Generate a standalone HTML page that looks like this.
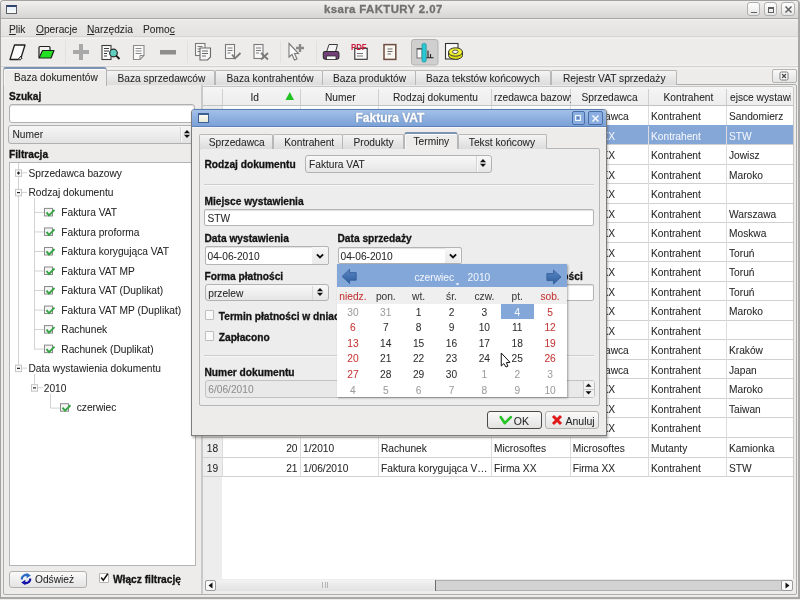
<!DOCTYPE html>
<html><head><meta charset="utf-8">
<style>
*{box-sizing:border-box}
html,body{margin:0;padding:0}
body{width:800px;height:600px;overflow:hidden;position:relative;will-change:transform;background:#edeceb;font-family:"Liberation Sans",sans-serif;font-size:10.2px;color:#262626}
.a{position:absolute}
.t{position:absolute;white-space:nowrap;line-height:10px;-webkit-text-stroke:0.05px currentColor}
.b{font-weight:bold;-webkit-text-stroke:0.3px currentColor;color:#141414}
.u{text-decoration:underline;text-underline-offset:1px}
.tab{top:69.5px;height:15.5px;border:1px solid #b8b8b8;border-bottom:none;border-radius:2px 2px 0 0;background:linear-gradient(#f4f4f4,#dcdcdc)}
.dtab{top:134.4px;height:14.6px;border:1px solid #b8b8b8;border-bottom:none;border-radius:2px 2px 0 0;background:linear-gradient(#f4f4f4,#dcdcdc)}
.cmb{border:1px solid #b2b2b2;border-radius:3px;background:linear-gradient(#f8f8f8,#e6e6e6)}
.inp{border:1px solid #b2b2b2;border-radius:2px;background:#fff;box-shadow:inset 0 1px 1px #e2e2e2}
.chk{width:9.5px;height:10px;border:1px solid #bdbdbd;border-radius:1px;background:#fafafa}
</style></head><body>

<div class="a" style="left:1.00px;top:19.00px;width:798.00px;height:18.00px;background:linear-gradient(#ebeae8,#e3e2e0)"></div>
<div class="a" style="left:1.00px;top:36.30px;width:798.00px;height:1.00px;background:#d6d5d3"></div>
<div class="a" style="left:1.00px;top:37.50px;width:798.00px;height:1.00px;background:#f4f3f1"></div>
<div class="a" style="left:1.00px;top:65.00px;width:798.00px;height:1.00px;background:#f3f2f0"></div>
<div class="a" style="left:1.00px;top:66.30px;width:798.00px;height:1.20px;background:#d4d3d1"></div>
<div class="a" style="left:1.00px;top:68.00px;width:798.00px;height:1.00px;background:#f3f2f0"></div>
<div class="a" style="left:0;top:0;width:800px;height:599px;border:1px solid #a2a2a0;border-right:2px solid #a8a8a6;border-bottom:2px solid #a8a8a6;border-radius:4px 4px 0 0"></div>
<div class="a" style="left:1px;top:1px;width:797px;height:18px;background:linear-gradient(#f1f0ee,#d6d5d3);border-bottom:1px solid #a9a8a6;border-radius:3px 3px 0 0"></div>
<div class="a" style="left:1.00px;top:19.00px;width:797.00px;height:1.00px;background:#f2f1ef"></div>
<div class="a" style="left:6px;top:4.8px;width:11px;height:8.8px;border:1px solid #5c5f66;border-top:2.2px solid #34466c;background:linear-gradient(#e6f0fc,#fbfbf6)"></div>
<div class="t b" style="left:324px;top:2.9px;font-size:11.4px;letter-spacing:0.4px;color:#707070;line-height:12px">ksara FAKTURY 2.07</div>
<div class="a" style="left:747px;top:2px;width:13px;height:14px;border:1px solid #b0b0b0;border-radius:3px;background:linear-gradient(#ffffff,#e6e6e6)"><div class="a" style="left:2.5px;top:8.5px;width:6.5px;height:1.6px;background:#606060"></div></div>
<div class="a" style="left:764px;top:2px;width:13px;height:14px;border:1px solid #b0b0b0;border-radius:3px;background:linear-gradient(#ffffff,#e6e6e6)"><div class="a" style="left:2.5px;top:3.5px;width:6.5px;height:6px;border:1px solid #606060;border-top:2px solid #606060"></div></div>
<div class="a" style="left:781px;top:2px;width:14px;height:14px;border:1px solid #b0b0b0;border-radius:3px;background:linear-gradient(#ffffff,#e6e6e6)"><svg class="a" style="left:2px;top:2px" width="9" height="9" viewBox="0 0 9 9"><path d="M1.5 1.5L7.5 7.5M7.5 1.5L1.5 7.5" stroke="#606060" stroke-width="1.5"/></svg></div>
<div class="t" style="left:9.00px;top:25.20px;"><span class="u">P</span>lik</div>
<div class="t" style="left:36.00px;top:25.20px;"><span class="u">O</span>peracje</div>
<div class="t" style="left:87.00px;top:25.20px;"><span class="u">N</span>arzędzia</div>
<div class="t" style="left:143.00px;top:25.20px;">Pomo<span class="u">c</span></div>
<!-- toolbar -->
<svg class="a" style="left:0;top:36px" width="480" height="32" viewBox="0 36 480 32">
 <g stroke-linejoin="round">
 <!-- new -->
 <path d="M14.5 45 L25 45 L20.5 59.5 L10 59.5 Z" fill="#fbfbfb" stroke="#1e1e1e" stroke-width="1.3"/>
 <path d="M18 59.5 L21 56 L22 59" fill="#ddd" stroke="#1e1e1e" stroke-width="1"/>
 <!-- folder -->
 <path d="M39 57.5 L39 47.5 Q39 46.5 40 46.5 L49 46.5 Q50 46.5 50 47.5 L50 50" fill="#f2f2f2" stroke="#1e1e1e" stroke-width="1.2"/>
 <path d="M39 58 L42.5 50.5 L54 50.5 L51 58 Z" fill="#22e022" stroke="#1e1e1e" stroke-width="1.2"/>
 </g>
 <line x1="65.5" y1="41" x2="65.5" y2="63" stroke="#e0e0e0"/>
 <!-- plus -->
 <path d="M79 44 h4 v6 h6 v4 h-6 v6 h-4 v-6 h-6 v-4 h6 z" fill="#a8a8a8"/>
 <!-- doc magnifier -->
 <rect x="102" y="45.5" width="9" height="14" fill="#fafafa" stroke="#3c3c3c" stroke-width="1.1"/>
 <path d="M104 48.5h5M104 51h5M104 53.5h3M104 56h3" stroke="#3c3c3c" stroke-width="1"/>
 <circle cx="113.5" cy="53" r="3.8" fill="#5fd0c0" stroke="#2a2a2a" stroke-width="1.2"/>
 <path d="M116 55.5 L119.5 59" stroke="#1e1e1e" stroke-width="1.8"/>
 <!-- doc -->
 <path d="M133.5 45.5 h10.5 v10 l-4 4 h-6.5 z" fill="#fafafa" stroke="#8a8a8a" stroke-width="1.1"/>
 <path d="M140 59.5 v-4 h4" fill="none" stroke="#8a8a8a" stroke-width="1"/>
 <path d="M135.5 48.5h6M135.5 51h6M135.5 53.5h6" stroke="#8a8a8a" stroke-width="1"/>
 <!-- minus -->
 <rect x="160" y="50" width="16" height="4.5" fill="#8d8d8d"/>
 <line x1="187.5" y1="41" x2="187.5" y2="63" stroke="#e0e0e0"/>
 <!-- copy docs -->
 <rect x="195.5" y="43.5" width="9.5" height="12" fill="#f7f7f7" stroke="#7a7a7a" stroke-width="1.1"/>
 <path d="M197.5 46.5h5M197.5 49h5M197.5 51.5h5" stroke="#7a7a7a"/>
 <path d="M200 48 h10.5 v9 l-3 3 h-7.5 z" fill="#f7f7f7" stroke="#6a6a6a" stroke-width="1.1"/>
 <path d="M202 51h6M202 53.5h6M202 56h4" stroke="#6a6a6a"/>
 <!-- doc check -->
 <rect x="225.5" y="44.5" width="9" height="14" fill="#f7f7f7" stroke="#7a7a7a" stroke-width="1.1"/>
 <path d="M227.5 48h5M227.5 50.5h5M227.5 53h3" stroke="#7a7a7a"/>
 <path d="M232 54.5 L235 58.5 L240.5 53" fill="none" stroke="#7a7a7a" stroke-width="1.8"/>
 <!-- doc x -->
 <rect x="254" y="44.5" width="9" height="14" fill="#f7f7f7" stroke="#7a7a7a" stroke-width="1.1"/>
 <path d="M256 48h5M256 50.5h5M256 53h3" stroke="#7a7a7a"/>
 <path d="M261 53 L268 59.5 M268 53 L261 59.5" fill="none" stroke="#7a7a7a" stroke-width="1.8"/>
 <line x1="280.5" y1="41" x2="280.5" y2="63" stroke="#e0e0e0"/>
 <!-- cursor plus -->
 <path d="M289 43.5 L289 57 L292 54.5 L294.5 60 L297 59 L294.5 53.5 L298.5 53.5 Z" fill="#fafafa" stroke="#7a7a7a" stroke-width="1.1"/>
 <path d="M300 44 v8 M296 48 h8" stroke="#8a8a8a" stroke-width="2.4"/>
 <line x1="316.5" y1="41" x2="316.5" y2="63" stroke="#e0e0e0"/>
 <!-- printer -->
 <path d="M326.5 52 L329 44.5 L337.5 44.5 L335.5 52 Z" fill="#f4f4f4" stroke="#3a3a3a" stroke-width="1"/>
 <rect x="323.3" y="51.5" width="15.6" height="7.6" rx="1.8" fill="#74407a" stroke="#2a2a2a" stroke-width="1.1"/>
 <rect x="326.5" y="56" width="9.5" height="3.6" fill="#fafafa" stroke="#2e2e2e" stroke-width="0.8"/>
 <!-- pdf -->
 <rect x="354.8" y="48.3" width="12.4" height="11" fill="#fafafa" stroke="#2e2e2e" stroke-width="1.1"/>
 <path d="M357 53.5h6M357 56h6" stroke="#666" stroke-width="0.9"/>
 <text x="351" y="50.3" font-family="Liberation Sans" font-weight="bold" font-size="8.4" textLength="15.6" lengthAdjust="spacingAndGlyphs" fill="#cc1a3a">PDF</text>
 <!-- brown doc -->
 <rect x="384" y="44.6" width="11.8" height="14.8" fill="#faf6f2" stroke="#6e4c42" stroke-width="1.5"/>
 <path d="M387.5 49h5M387.5 51.5h5M387.5 54h3.5" stroke="#555" stroke-width="0.9"/>
 <!-- toggle -->
 <rect x="411.5" y="39.5" width="26.5" height="25.5" rx="2.5" fill="#cfcfcf" stroke="#b2b2b2"/>
 <rect x="417" y="48.5" width="5" height="9.5" fill="#fafafa" stroke="#666" stroke-width="0.9"/>
 <rect x="417" y="48" width="5" height="1.6" fill="#555"/>
 <rect x="422" y="43.5" width="4.2" height="18.5" rx="1.5" fill="#2ac8d4" stroke="#1a8f99" stroke-width="0.7"/>
 <path d="M428 50.5v7M430.5 54v3.5M426.5 57.8h7" stroke="#222" stroke-width="1.1"/>
 <!-- yellow nut -->
 <rect x="445.5" y="43.5" width="12.5" height="15.5" fill="#fafafa" stroke="#333" stroke-width="1.1"/>
 <path d="M448.5 52 v3.5 a7 3.8 0 0 0 14 0 v-3.5" fill="#dede10" stroke="#333" stroke-width="1"/>
 <ellipse cx="455.5" cy="52" rx="7" ry="4.2" fill="#eef030" stroke="#333" stroke-width="1"/>
 <ellipse cx="455.3" cy="51.8" rx="2.8" ry="1.7" fill="#fafafa" stroke="#444" stroke-width="0.9"/>
</svg>
<div class="a" style="left:3.00px;top:84.00px;width:793.50px;height:510.50px;border:1px solid #adadab;border-radius:2px;background:#edeceb"></div>
<div class="a tab" style="left:106px;width:109px"></div>
<div class="a tab" style="left:215px;width:108px"></div>
<div class="a tab" style="left:322px;width:94px"></div>
<div class="a tab" style="left:415px;width:136px"></div>
<div class="a tab" style="left:551px;width:126px"></div>
<div class="t" style="left:117.50px;top:73.50px;">Baza sprzedawców</div>
<div class="t" style="left:226.50px;top:73.50px;">Baza kontrahentów</div>
<div class="t" style="left:333.00px;top:73.50px;">Baza produktów</div>
<div class="t" style="left:426.00px;top:73.50px;">Baza tekstów końcowych</div>
<div class="t" style="left:563.00px;top:73.50px;">Rejestr VAT sprzedaży</div>
<div class="a" style="left:3.00px;top:67.00px;width:104.00px;height:19.00px;border:1px solid #b4b4b4;border-bottom:none;border-top:2px solid #7a94b2;border-radius:3px 3px 0 0;background:#edeceb;box-shadow:inset 0 1px 0 #fbfbfb,inset 1px 0 0 #f8f8f8"></div>
<div class="t" style="left:14.00px;top:72.80px;">Baza dokumentów</div>
<div class="a" style="left:772.00px;top:69.00px;width:25.00px;height:14.00px;border:1px solid #b4b4b4;border-radius:2px;background:linear-gradient(#f8f8f8,#e4e4e4)"></div>
<svg class="a" style="left:779px;top:71px" width="10" height="10" viewBox="0 0 10 10"><rect x="1" y="1" width="8" height="8" rx="1.5" fill="#fff" stroke="#777" stroke-width="1"/><path d="M3 3L7 7M7 3L3 7" stroke="#444" stroke-width="1.2"/></svg>
<div class="a" style="left:202.50px;top:86.00px;width:591.00px;height:493.00px;background:#fff;border-left:1px solid #b8b8b8"></div>
<div class="a" style="left:203.00px;top:86.00px;width:19.00px;height:493.00px;background:#ededed"></div>
<div class="a" style="left:203.00px;top:86.00px;width:590.00px;height:20.00px;background:linear-gradient(#f5f5f5,#ededed);border-bottom:1px solid #c2c2c2;border-top:1px solid #c6c6c6"></div>
<div class="a" style="left:221.50px;top:89.00px;width:1.00px;height:16.00px;background:#cfcfcf"></div>
<div class="a" style="left:299.50px;top:89.00px;width:1.00px;height:16.00px;background:#cfcfcf"></div>
<div class="a" style="left:377.50px;top:89.00px;width:1.00px;height:16.00px;background:#cfcfcf"></div>
<div class="a" style="left:490.50px;top:89.00px;width:1.00px;height:16.00px;background:#cfcfcf"></div>
<div class="a" style="left:570.00px;top:89.00px;width:1.00px;height:16.00px;background:#cfcfcf"></div>
<div class="a" style="left:647.50px;top:89.00px;width:1.00px;height:16.00px;background:#cfcfcf"></div>
<div class="a" style="left:725.50px;top:89.00px;width:1.00px;height:16.00px;background:#cfcfcf"></div>
<div class="t" style="left:250.50px;top:93.00px;">Id</div>
<div class="t" style="left:325.00px;top:93.00px;">Numer</div>
<div class="t" style="left:393.00px;top:93.00px;">Rodzaj dokumentu</div>
<div class="t" style="left:581.50px;top:93.00px;">Sprzedawca</div>
<div class="t" style="left:663.50px;top:93.00px;">Kontrahent</div>
<div class="a" style="left:492px;top:88px;width:78.5px;height:17px;overflow:hidden"><div class="t" style="left:2px;top:5.00px">rzedawca bazowy</div></div>
<div class="a" style="left:727px;top:88px;width:63.5px;height:17px;overflow:hidden"><div class="t" style="left:3px;top:5.00px">ejsce wystawienia</div></div>
<svg class="a" style="left:285px;top:91px" width="10" height="10" viewBox="0 0 10 10"><path d="M0.5 9 L4.8 1 L9 9 Z" fill="#22c322"/></svg>
<div class="a" style="left:203.00px;top:124.53px;width:590.00px;height:1.00px;background:#d0d0d0"></div>
<div class="a" style="left:221.50px;top:106.00px;width:1.00px;height:19.53px;background:#dcdcdc"></div>
<div class="a" style="left:299.50px;top:106.00px;width:1.00px;height:19.53px;background:#dcdcdc"></div>
<div class="a" style="left:377.50px;top:106.00px;width:1.00px;height:19.53px;background:#dcdcdc"></div>
<div class="a" style="left:490.50px;top:106.00px;width:1.00px;height:19.53px;background:#dcdcdc"></div>
<div class="a" style="left:570.00px;top:106.00px;width:1.00px;height:19.53px;background:#dcdcdc"></div>
<div class="a" style="left:647.50px;top:106.00px;width:1.00px;height:19.53px;background:#dcdcdc"></div>
<div class="a" style="left:725.50px;top:106.00px;width:1.00px;height:19.53px;background:#dcdcdc"></div>
<div class="t" style="left:203.00px;top:112.00px;width:19.00px;text-align:center;">1</div>
<div class="t" style="left:572.70px;top:112.00px;">Sprzedawca</div>
<div class="t" style="left:651.00px;top:112.00px;">Kontrahent</div>
<div class="t" style="left:729.00px;top:112.00px;">Sandomierz</div>
<div class="a" style="left:222.00px;top:125.03px;width:571.00px;height:19.53px;background:#84a7d7"></div>
<div class="a" style="left:203.00px;top:144.06px;width:590.00px;height:1.00px;background:#d0d0d0"></div>
<div class="a" style="left:221.50px;top:125.53px;width:1.00px;height:19.53px;background:#dcdcdc"></div>
<div class="a" style="left:299.50px;top:125.53px;width:1.00px;height:19.53px;background:#dcdcdc"></div>
<div class="a" style="left:377.50px;top:125.53px;width:1.00px;height:19.53px;background:#dcdcdc"></div>
<div class="a" style="left:490.50px;top:125.53px;width:1.00px;height:19.53px;background:#dcdcdc"></div>
<div class="a" style="left:570.00px;top:125.53px;width:1.00px;height:19.53px;background:#dcdcdc"></div>
<div class="a" style="left:647.50px;top:125.53px;width:1.00px;height:19.53px;background:#dcdcdc"></div>
<div class="a" style="left:725.50px;top:125.53px;width:1.00px;height:19.53px;background:#dcdcdc"></div>
<div class="t" style="left:203.00px;top:131.53px;width:19.00px;text-align:center;">2</div>
<div class="t" style="left:572.70px;top:131.53px;color:#f4f7fb;">Firma XX</div>
<div class="t" style="left:651.00px;top:131.53px;color:#f4f7fb;">Kontrahent</div>
<div class="t" style="left:729.00px;top:131.53px;color:#f4f7fb;">STW</div>
<div class="a" style="left:203.00px;top:163.59px;width:590.00px;height:1.00px;background:#d0d0d0"></div>
<div class="a" style="left:221.50px;top:145.06px;width:1.00px;height:19.53px;background:#dcdcdc"></div>
<div class="a" style="left:299.50px;top:145.06px;width:1.00px;height:19.53px;background:#dcdcdc"></div>
<div class="a" style="left:377.50px;top:145.06px;width:1.00px;height:19.53px;background:#dcdcdc"></div>
<div class="a" style="left:490.50px;top:145.06px;width:1.00px;height:19.53px;background:#dcdcdc"></div>
<div class="a" style="left:570.00px;top:145.06px;width:1.00px;height:19.53px;background:#dcdcdc"></div>
<div class="a" style="left:647.50px;top:145.06px;width:1.00px;height:19.53px;background:#dcdcdc"></div>
<div class="a" style="left:725.50px;top:145.06px;width:1.00px;height:19.53px;background:#dcdcdc"></div>
<div class="t" style="left:203.00px;top:151.06px;width:19.00px;text-align:center;">3</div>
<div class="t" style="left:572.70px;top:151.06px;">Firma XX</div>
<div class="t" style="left:651.00px;top:151.06px;">Kontrahent</div>
<div class="t" style="left:729.00px;top:151.06px;">Jowisz</div>
<div class="a" style="left:203.00px;top:183.12px;width:590.00px;height:1.00px;background:#d0d0d0"></div>
<div class="a" style="left:221.50px;top:164.59px;width:1.00px;height:19.53px;background:#dcdcdc"></div>
<div class="a" style="left:299.50px;top:164.59px;width:1.00px;height:19.53px;background:#dcdcdc"></div>
<div class="a" style="left:377.50px;top:164.59px;width:1.00px;height:19.53px;background:#dcdcdc"></div>
<div class="a" style="left:490.50px;top:164.59px;width:1.00px;height:19.53px;background:#dcdcdc"></div>
<div class="a" style="left:570.00px;top:164.59px;width:1.00px;height:19.53px;background:#dcdcdc"></div>
<div class="a" style="left:647.50px;top:164.59px;width:1.00px;height:19.53px;background:#dcdcdc"></div>
<div class="a" style="left:725.50px;top:164.59px;width:1.00px;height:19.53px;background:#dcdcdc"></div>
<div class="t" style="left:203.00px;top:170.59px;width:19.00px;text-align:center;">4</div>
<div class="t" style="left:572.70px;top:170.59px;">Firma XX</div>
<div class="t" style="left:651.00px;top:170.59px;">Kontrahent</div>
<div class="t" style="left:729.00px;top:170.59px;">Maroko</div>
<div class="a" style="left:203.00px;top:202.65px;width:590.00px;height:1.00px;background:#d0d0d0"></div>
<div class="a" style="left:221.50px;top:184.12px;width:1.00px;height:19.53px;background:#dcdcdc"></div>
<div class="a" style="left:299.50px;top:184.12px;width:1.00px;height:19.53px;background:#dcdcdc"></div>
<div class="a" style="left:377.50px;top:184.12px;width:1.00px;height:19.53px;background:#dcdcdc"></div>
<div class="a" style="left:490.50px;top:184.12px;width:1.00px;height:19.53px;background:#dcdcdc"></div>
<div class="a" style="left:570.00px;top:184.12px;width:1.00px;height:19.53px;background:#dcdcdc"></div>
<div class="a" style="left:647.50px;top:184.12px;width:1.00px;height:19.53px;background:#dcdcdc"></div>
<div class="a" style="left:725.50px;top:184.12px;width:1.00px;height:19.53px;background:#dcdcdc"></div>
<div class="t" style="left:203.00px;top:190.12px;width:19.00px;text-align:center;">5</div>
<div class="t" style="left:572.70px;top:190.12px;">Firma XX</div>
<div class="t" style="left:651.00px;top:190.12px;">Kontrahent</div>
<div class="a" style="left:203.00px;top:222.18px;width:590.00px;height:1.00px;background:#d0d0d0"></div>
<div class="a" style="left:221.50px;top:203.65px;width:1.00px;height:19.53px;background:#dcdcdc"></div>
<div class="a" style="left:299.50px;top:203.65px;width:1.00px;height:19.53px;background:#dcdcdc"></div>
<div class="a" style="left:377.50px;top:203.65px;width:1.00px;height:19.53px;background:#dcdcdc"></div>
<div class="a" style="left:490.50px;top:203.65px;width:1.00px;height:19.53px;background:#dcdcdc"></div>
<div class="a" style="left:570.00px;top:203.65px;width:1.00px;height:19.53px;background:#dcdcdc"></div>
<div class="a" style="left:647.50px;top:203.65px;width:1.00px;height:19.53px;background:#dcdcdc"></div>
<div class="a" style="left:725.50px;top:203.65px;width:1.00px;height:19.53px;background:#dcdcdc"></div>
<div class="t" style="left:203.00px;top:209.65px;width:19.00px;text-align:center;">6</div>
<div class="t" style="left:572.70px;top:209.65px;">Firma XX</div>
<div class="t" style="left:651.00px;top:209.65px;">Kontrahent</div>
<div class="t" style="left:729.00px;top:209.65px;">Warszawa</div>
<div class="a" style="left:203.00px;top:241.71px;width:590.00px;height:1.00px;background:#d0d0d0"></div>
<div class="a" style="left:221.50px;top:223.18px;width:1.00px;height:19.53px;background:#dcdcdc"></div>
<div class="a" style="left:299.50px;top:223.18px;width:1.00px;height:19.53px;background:#dcdcdc"></div>
<div class="a" style="left:377.50px;top:223.18px;width:1.00px;height:19.53px;background:#dcdcdc"></div>
<div class="a" style="left:490.50px;top:223.18px;width:1.00px;height:19.53px;background:#dcdcdc"></div>
<div class="a" style="left:570.00px;top:223.18px;width:1.00px;height:19.53px;background:#dcdcdc"></div>
<div class="a" style="left:647.50px;top:223.18px;width:1.00px;height:19.53px;background:#dcdcdc"></div>
<div class="a" style="left:725.50px;top:223.18px;width:1.00px;height:19.53px;background:#dcdcdc"></div>
<div class="t" style="left:203.00px;top:229.18px;width:19.00px;text-align:center;">7</div>
<div class="t" style="left:572.70px;top:229.18px;">Firma XX</div>
<div class="t" style="left:651.00px;top:229.18px;">Kontrahent</div>
<div class="t" style="left:729.00px;top:229.18px;">Moskwa</div>
<div class="a" style="left:203.00px;top:261.24px;width:590.00px;height:1.00px;background:#d0d0d0"></div>
<div class="a" style="left:221.50px;top:242.71px;width:1.00px;height:19.53px;background:#dcdcdc"></div>
<div class="a" style="left:299.50px;top:242.71px;width:1.00px;height:19.53px;background:#dcdcdc"></div>
<div class="a" style="left:377.50px;top:242.71px;width:1.00px;height:19.53px;background:#dcdcdc"></div>
<div class="a" style="left:490.50px;top:242.71px;width:1.00px;height:19.53px;background:#dcdcdc"></div>
<div class="a" style="left:570.00px;top:242.71px;width:1.00px;height:19.53px;background:#dcdcdc"></div>
<div class="a" style="left:647.50px;top:242.71px;width:1.00px;height:19.53px;background:#dcdcdc"></div>
<div class="a" style="left:725.50px;top:242.71px;width:1.00px;height:19.53px;background:#dcdcdc"></div>
<div class="t" style="left:203.00px;top:248.71px;width:19.00px;text-align:center;">8</div>
<div class="t" style="left:572.70px;top:248.71px;">Firma XX</div>
<div class="t" style="left:651.00px;top:248.71px;">Kontrahent</div>
<div class="t" style="left:729.00px;top:248.71px;">Toruń</div>
<div class="a" style="left:203.00px;top:280.77px;width:590.00px;height:1.00px;background:#d0d0d0"></div>
<div class="a" style="left:221.50px;top:262.24px;width:1.00px;height:19.53px;background:#dcdcdc"></div>
<div class="a" style="left:299.50px;top:262.24px;width:1.00px;height:19.53px;background:#dcdcdc"></div>
<div class="a" style="left:377.50px;top:262.24px;width:1.00px;height:19.53px;background:#dcdcdc"></div>
<div class="a" style="left:490.50px;top:262.24px;width:1.00px;height:19.53px;background:#dcdcdc"></div>
<div class="a" style="left:570.00px;top:262.24px;width:1.00px;height:19.53px;background:#dcdcdc"></div>
<div class="a" style="left:647.50px;top:262.24px;width:1.00px;height:19.53px;background:#dcdcdc"></div>
<div class="a" style="left:725.50px;top:262.24px;width:1.00px;height:19.53px;background:#dcdcdc"></div>
<div class="t" style="left:203.00px;top:268.24px;width:19.00px;text-align:center;">9</div>
<div class="t" style="left:572.70px;top:268.24px;">Firma XX</div>
<div class="t" style="left:651.00px;top:268.24px;">Kontrahent</div>
<div class="t" style="left:729.00px;top:268.24px;">Toruń</div>
<div class="a" style="left:203.00px;top:300.30px;width:590.00px;height:1.00px;background:#d0d0d0"></div>
<div class="a" style="left:221.50px;top:281.77px;width:1.00px;height:19.53px;background:#dcdcdc"></div>
<div class="a" style="left:299.50px;top:281.77px;width:1.00px;height:19.53px;background:#dcdcdc"></div>
<div class="a" style="left:377.50px;top:281.77px;width:1.00px;height:19.53px;background:#dcdcdc"></div>
<div class="a" style="left:490.50px;top:281.77px;width:1.00px;height:19.53px;background:#dcdcdc"></div>
<div class="a" style="left:570.00px;top:281.77px;width:1.00px;height:19.53px;background:#dcdcdc"></div>
<div class="a" style="left:647.50px;top:281.77px;width:1.00px;height:19.53px;background:#dcdcdc"></div>
<div class="a" style="left:725.50px;top:281.77px;width:1.00px;height:19.53px;background:#dcdcdc"></div>
<div class="t" style="left:203.00px;top:287.77px;width:19.00px;text-align:center;">10</div>
<div class="t" style="left:572.70px;top:287.77px;">Firma XX</div>
<div class="t" style="left:651.00px;top:287.77px;">Kontrahent</div>
<div class="t" style="left:729.00px;top:287.77px;">Toruń</div>
<div class="a" style="left:203.00px;top:319.83px;width:590.00px;height:1.00px;background:#d0d0d0"></div>
<div class="a" style="left:221.50px;top:301.30px;width:1.00px;height:19.53px;background:#dcdcdc"></div>
<div class="a" style="left:299.50px;top:301.30px;width:1.00px;height:19.53px;background:#dcdcdc"></div>
<div class="a" style="left:377.50px;top:301.30px;width:1.00px;height:19.53px;background:#dcdcdc"></div>
<div class="a" style="left:490.50px;top:301.30px;width:1.00px;height:19.53px;background:#dcdcdc"></div>
<div class="a" style="left:570.00px;top:301.30px;width:1.00px;height:19.53px;background:#dcdcdc"></div>
<div class="a" style="left:647.50px;top:301.30px;width:1.00px;height:19.53px;background:#dcdcdc"></div>
<div class="a" style="left:725.50px;top:301.30px;width:1.00px;height:19.53px;background:#dcdcdc"></div>
<div class="t" style="left:203.00px;top:307.30px;width:19.00px;text-align:center;">11</div>
<div class="t" style="left:572.70px;top:307.30px;">Firma XX</div>
<div class="t" style="left:651.00px;top:307.30px;">Kontrahent</div>
<div class="t" style="left:729.00px;top:307.30px;">Maroko</div>
<div class="a" style="left:203.00px;top:339.36px;width:590.00px;height:1.00px;background:#d0d0d0"></div>
<div class="a" style="left:221.50px;top:320.83px;width:1.00px;height:19.53px;background:#dcdcdc"></div>
<div class="a" style="left:299.50px;top:320.83px;width:1.00px;height:19.53px;background:#dcdcdc"></div>
<div class="a" style="left:377.50px;top:320.83px;width:1.00px;height:19.53px;background:#dcdcdc"></div>
<div class="a" style="left:490.50px;top:320.83px;width:1.00px;height:19.53px;background:#dcdcdc"></div>
<div class="a" style="left:570.00px;top:320.83px;width:1.00px;height:19.53px;background:#dcdcdc"></div>
<div class="a" style="left:647.50px;top:320.83px;width:1.00px;height:19.53px;background:#dcdcdc"></div>
<div class="a" style="left:725.50px;top:320.83px;width:1.00px;height:19.53px;background:#dcdcdc"></div>
<div class="t" style="left:203.00px;top:326.83px;width:19.00px;text-align:center;">12</div>
<div class="t" style="left:572.70px;top:326.83px;">Firma XX</div>
<div class="t" style="left:651.00px;top:326.83px;">Kontrahent</div>
<div class="a" style="left:203.00px;top:358.89px;width:590.00px;height:1.00px;background:#d0d0d0"></div>
<div class="a" style="left:221.50px;top:340.36px;width:1.00px;height:19.53px;background:#dcdcdc"></div>
<div class="a" style="left:299.50px;top:340.36px;width:1.00px;height:19.53px;background:#dcdcdc"></div>
<div class="a" style="left:377.50px;top:340.36px;width:1.00px;height:19.53px;background:#dcdcdc"></div>
<div class="a" style="left:490.50px;top:340.36px;width:1.00px;height:19.53px;background:#dcdcdc"></div>
<div class="a" style="left:570.00px;top:340.36px;width:1.00px;height:19.53px;background:#dcdcdc"></div>
<div class="a" style="left:647.50px;top:340.36px;width:1.00px;height:19.53px;background:#dcdcdc"></div>
<div class="a" style="left:725.50px;top:340.36px;width:1.00px;height:19.53px;background:#dcdcdc"></div>
<div class="t" style="left:203.00px;top:346.36px;width:19.00px;text-align:center;">13</div>
<div class="t" style="left:572.70px;top:346.36px;">Sprzedawca</div>
<div class="t" style="left:651.00px;top:346.36px;">Kontrahent</div>
<div class="t" style="left:729.00px;top:346.36px;">Kraków</div>
<div class="a" style="left:203.00px;top:378.42px;width:590.00px;height:1.00px;background:#d0d0d0"></div>
<div class="a" style="left:221.50px;top:359.89px;width:1.00px;height:19.53px;background:#dcdcdc"></div>
<div class="a" style="left:299.50px;top:359.89px;width:1.00px;height:19.53px;background:#dcdcdc"></div>
<div class="a" style="left:377.50px;top:359.89px;width:1.00px;height:19.53px;background:#dcdcdc"></div>
<div class="a" style="left:490.50px;top:359.89px;width:1.00px;height:19.53px;background:#dcdcdc"></div>
<div class="a" style="left:570.00px;top:359.89px;width:1.00px;height:19.53px;background:#dcdcdc"></div>
<div class="a" style="left:647.50px;top:359.89px;width:1.00px;height:19.53px;background:#dcdcdc"></div>
<div class="a" style="left:725.50px;top:359.89px;width:1.00px;height:19.53px;background:#dcdcdc"></div>
<div class="t" style="left:203.00px;top:365.89px;width:19.00px;text-align:center;">14</div>
<div class="t" style="left:572.70px;top:365.89px;">Sprzedawca</div>
<div class="t" style="left:651.00px;top:365.89px;">Kontrahent</div>
<div class="t" style="left:729.00px;top:365.89px;">Japan</div>
<div class="a" style="left:203.00px;top:397.95px;width:590.00px;height:1.00px;background:#d0d0d0"></div>
<div class="a" style="left:221.50px;top:379.42px;width:1.00px;height:19.53px;background:#dcdcdc"></div>
<div class="a" style="left:299.50px;top:379.42px;width:1.00px;height:19.53px;background:#dcdcdc"></div>
<div class="a" style="left:377.50px;top:379.42px;width:1.00px;height:19.53px;background:#dcdcdc"></div>
<div class="a" style="left:490.50px;top:379.42px;width:1.00px;height:19.53px;background:#dcdcdc"></div>
<div class="a" style="left:570.00px;top:379.42px;width:1.00px;height:19.53px;background:#dcdcdc"></div>
<div class="a" style="left:647.50px;top:379.42px;width:1.00px;height:19.53px;background:#dcdcdc"></div>
<div class="a" style="left:725.50px;top:379.42px;width:1.00px;height:19.53px;background:#dcdcdc"></div>
<div class="t" style="left:203.00px;top:385.42px;width:19.00px;text-align:center;">15</div>
<div class="t" style="left:572.70px;top:385.42px;">Firma XX</div>
<div class="t" style="left:651.00px;top:385.42px;">Kontrahent</div>
<div class="t" style="left:729.00px;top:385.42px;">Maroko</div>
<div class="a" style="left:203.00px;top:417.48px;width:590.00px;height:1.00px;background:#d0d0d0"></div>
<div class="a" style="left:221.50px;top:398.95px;width:1.00px;height:19.53px;background:#dcdcdc"></div>
<div class="a" style="left:299.50px;top:398.95px;width:1.00px;height:19.53px;background:#dcdcdc"></div>
<div class="a" style="left:377.50px;top:398.95px;width:1.00px;height:19.53px;background:#dcdcdc"></div>
<div class="a" style="left:490.50px;top:398.95px;width:1.00px;height:19.53px;background:#dcdcdc"></div>
<div class="a" style="left:570.00px;top:398.95px;width:1.00px;height:19.53px;background:#dcdcdc"></div>
<div class="a" style="left:647.50px;top:398.95px;width:1.00px;height:19.53px;background:#dcdcdc"></div>
<div class="a" style="left:725.50px;top:398.95px;width:1.00px;height:19.53px;background:#dcdcdc"></div>
<div class="t" style="left:203.00px;top:404.95px;width:19.00px;text-align:center;">16</div>
<div class="t" style="left:572.70px;top:404.95px;">Firma XX</div>
<div class="t" style="left:651.00px;top:404.95px;">Kontrahent</div>
<div class="t" style="left:729.00px;top:404.95px;">Taiwan</div>
<div class="a" style="left:203.00px;top:437.01px;width:590.00px;height:1.00px;background:#d0d0d0"></div>
<div class="a" style="left:221.50px;top:418.48px;width:1.00px;height:19.53px;background:#dcdcdc"></div>
<div class="a" style="left:299.50px;top:418.48px;width:1.00px;height:19.53px;background:#dcdcdc"></div>
<div class="a" style="left:377.50px;top:418.48px;width:1.00px;height:19.53px;background:#dcdcdc"></div>
<div class="a" style="left:490.50px;top:418.48px;width:1.00px;height:19.53px;background:#dcdcdc"></div>
<div class="a" style="left:570.00px;top:418.48px;width:1.00px;height:19.53px;background:#dcdcdc"></div>
<div class="a" style="left:647.50px;top:418.48px;width:1.00px;height:19.53px;background:#dcdcdc"></div>
<div class="a" style="left:725.50px;top:418.48px;width:1.00px;height:19.53px;background:#dcdcdc"></div>
<div class="t" style="left:203.00px;top:424.48px;width:19.00px;text-align:center;">17</div>
<div class="t" style="left:572.70px;top:424.48px;">Firma XX</div>
<div class="t" style="left:651.00px;top:424.48px;">Kontrahent</div>
<div class="a" style="left:203.00px;top:456.54px;width:590.00px;height:1.00px;background:#d0d0d0"></div>
<div class="a" style="left:221.50px;top:438.01px;width:1.00px;height:19.53px;background:#dcdcdc"></div>
<div class="a" style="left:299.50px;top:438.01px;width:1.00px;height:19.53px;background:#dcdcdc"></div>
<div class="a" style="left:377.50px;top:438.01px;width:1.00px;height:19.53px;background:#dcdcdc"></div>
<div class="a" style="left:490.50px;top:438.01px;width:1.00px;height:19.53px;background:#dcdcdc"></div>
<div class="a" style="left:570.00px;top:438.01px;width:1.00px;height:19.53px;background:#dcdcdc"></div>
<div class="a" style="left:647.50px;top:438.01px;width:1.00px;height:19.53px;background:#dcdcdc"></div>
<div class="a" style="left:725.50px;top:438.01px;width:1.00px;height:19.53px;background:#dcdcdc"></div>
<div class="t" style="left:203.00px;top:444.01px;width:19.00px;text-align:center;">18</div>
<div class="t" style="left:222.00px;top:444.01px;width:75.50px;text-align:right;">20</div>
<div class="t" style="left:303.00px;top:444.01px;">1/2010</div>
<div class="t" style="left:381.00px;top:444.01px;">Rachunek</div>
<div class="t" style="left:494.00px;top:444.01px;">Microsoftes</div>
<div class="t" style="left:572.70px;top:444.01px;">Microsoftes</div>
<div class="t" style="left:651.00px;top:444.01px;">Mutanty</div>
<div class="t" style="left:729.00px;top:444.01px;">Kamionka</div>
<div class="a" style="left:203.00px;top:476.07px;width:590.00px;height:1.00px;background:#d0d0d0"></div>
<div class="a" style="left:221.50px;top:457.54px;width:1.00px;height:19.53px;background:#dcdcdc"></div>
<div class="a" style="left:299.50px;top:457.54px;width:1.00px;height:19.53px;background:#dcdcdc"></div>
<div class="a" style="left:377.50px;top:457.54px;width:1.00px;height:19.53px;background:#dcdcdc"></div>
<div class="a" style="left:490.50px;top:457.54px;width:1.00px;height:19.53px;background:#dcdcdc"></div>
<div class="a" style="left:570.00px;top:457.54px;width:1.00px;height:19.53px;background:#dcdcdc"></div>
<div class="a" style="left:647.50px;top:457.54px;width:1.00px;height:19.53px;background:#dcdcdc"></div>
<div class="a" style="left:725.50px;top:457.54px;width:1.00px;height:19.53px;background:#dcdcdc"></div>
<div class="t" style="left:203.00px;top:463.54px;width:19.00px;text-align:center;">19</div>
<div class="t" style="left:222.00px;top:463.54px;width:75.50px;text-align:right;">21</div>
<div class="t" style="left:303.00px;top:463.54px;">1/06/2010</div>
<div class="t" style="left:381.00px;top:463.54px;">Faktura korygująca V…</div>
<div class="t" style="left:494.00px;top:463.54px;">Firma XX</div>
<div class="t" style="left:572.70px;top:463.54px;">Firma XX</div>
<div class="t" style="left:651.00px;top:463.54px;">Kontrahent</div>
<div class="t" style="left:729.00px;top:463.54px;">STW</div>
<div class="a" style="left:793.00px;top:87.00px;width:1.00px;height:492.00px;background:#c9c9c9"></div>
<div class="a" style="left:203.00px;top:579.00px;width:591.00px;height:12.00px;background:#ededed"></div>
<div class="a" style="left:204.50px;top:579.50px;width:588.00px;height:11.50px;border:1px solid #b0b0b0;border-radius:2px;background:#d3d3d3"></div>
<div class="a" style="left:215.00px;top:580.00px;width:221.00px;height:10.50px;background:linear-gradient(#f2f2f2,#e2e2e2);border-right:1.5px solid #6d6d6d"></div>
<div class="a" style="left:322.20px;top:582.00px;width:1.00px;height:6.00px;background:#b4b4b4"></div>
<div class="a" style="left:324.80px;top:582.00px;width:1.00px;height:6.00px;background:#b4b4b4"></div>
<div class="a" style="left:327.20px;top:582.00px;width:1.00px;height:6.00px;background:#b4b4b4"></div>
<div class="a" style="left:204.50px;top:579.50px;width:11.50px;height:11.50px;border:1px solid #9a9a9a;border-radius:2px;background:#fafafa"></div>
<svg class="a" style="left:207px;top:582px" width="7" height="7" viewBox="0 0 7 7"><path d="M5.5 0.5 V6.5 L1.5 3.5Z" fill="#111"/></svg>
<div class="a" style="left:781.00px;top:579.50px;width:11.50px;height:11.50px;border:1px solid #9a9a9a;border-radius:2px;background:#fafafa"></div>
<svg class="a" style="left:783.5px;top:582px" width="7" height="7" viewBox="0 0 7 7"><path d="M1.5 0.5 V6.5 L5.5 3.5Z" fill="#111"/></svg>
<div class="t b" style="left:9.00px;top:92.20px;">Szukaj</div>
<div class="a" style="left:8.50px;top:104.20px;width:186.80px;height:18.80px;border:1px solid #b0b0b0;border-radius:3px;background:#fff;box-shadow:inset 0 1px 1px #ddd"></div>
<div class="a" style="left:8.00px;top:125.00px;width:188.00px;height:18.50px;border:1px solid #b0b0b0;border-radius:3px;background:linear-gradient(#f6f6f6,#e3e3e3)"></div>
<div class="t" style="left:12.50px;top:129.70px;">Numer</div>
<div class="a" style="left:179.50px;top:127.00px;width:1.00px;height:14.50px;background:#d4d4d4"></div>
<div class="a" style="left:180.50px;top:127.00px;width:1.00px;height:14.50px;background:#fafafa"></div>
<svg class="a" style="left:182.10px;top:127.80px" width="10" height="12" viewBox="0 0 10 12"><path d="M5 2.1L8.1 5.3H1.9Z M5 9.9L8.1 6.7H1.9Z" fill="#111"/></svg>
<div class="t b" style="left:9.00px;top:150.20px;">Filtracja</div>
<div class="a" style="left:8.50px;top:162.00px;width:187.00px;height:403.50px;border:1px solid #b4b4b4;background:#fff"></div>
<div class="a" style="left:201.00px;top:85.00px;width:1.50px;height:509.00px;background:#c9c9c9"></div>
<svg class="a" style="left:0;top:160px" width="200" height="260" viewBox="0 160 200 260">
<path d="M18.5 163 V368.6" fill="none" stroke="#d2d2d2" stroke-width="1"/>
<path d="M34.5 198.3 V349.5" fill="none" stroke="#d2d2d2" stroke-width="1"/>
<path d="M34.5 374.1 V384.6" fill="none" stroke="#d2d2d2" stroke-width="1"/>
<path d="M50.5 393.6 V408.1 H60" fill="none" stroke="#d2d2d2" stroke-width="1"/>
<path d="M21.5 172.85 H27" fill="none" stroke="#d2d2d2" stroke-width="1"/>
<rect x="15.5" y="169.85" width="6" height="6.5" fill="#fafafa" stroke="#c4c4c4" stroke-width="1"/>
<path d="M17 173.05 h3" stroke="#222" stroke-width="1.2"/>
<path d="M18.5 171.55 v3" stroke="#222" stroke-width="1.2"/>
<path d="M21.5 192.38 H27" fill="none" stroke="#d2d2d2" stroke-width="1"/>
<rect x="15.5" y="189.38" width="6" height="6.5" fill="#fafafa" stroke="#c4c4c4" stroke-width="1"/>
<path d="M17 192.58 h3" stroke="#222" stroke-width="1.2"/>
<path d="M34.5 212.41 H44" fill="none" stroke="#d2d2d2" stroke-width="1"/>
<rect x="44.5" y="208.41" width="8" height="7.5" fill="#f4f4f4" stroke="#8a8a8a" stroke-width="1"/>
<path d="M46.5 212.41 L49 215.41 L54.5 209.91" fill="none" stroke="#34a444" stroke-width="1.9"/>
<path d="M34.5 231.94 H44" fill="none" stroke="#d2d2d2" stroke-width="1"/>
<rect x="44.5" y="227.94" width="8" height="7.5" fill="#f4f4f4" stroke="#8a8a8a" stroke-width="1"/>
<path d="M46.5 231.94 L49 234.94 L54.5 229.44" fill="none" stroke="#34a444" stroke-width="1.9"/>
<path d="M34.5 251.47 H44" fill="none" stroke="#d2d2d2" stroke-width="1"/>
<rect x="44.5" y="247.47" width="8" height="7.5" fill="#f4f4f4" stroke="#8a8a8a" stroke-width="1"/>
<path d="M46.5 251.47 L49 254.47 L54.5 248.97" fill="none" stroke="#34a444" stroke-width="1.9"/>
<path d="M34.5 271.00 H44" fill="none" stroke="#d2d2d2" stroke-width="1"/>
<rect x="44.5" y="267.00" width="8" height="7.5" fill="#f4f4f4" stroke="#8a8a8a" stroke-width="1"/>
<path d="M46.5 271.00 L49 274.00 L54.5 268.50" fill="none" stroke="#34a444" stroke-width="1.9"/>
<path d="M34.5 290.53 H44" fill="none" stroke="#d2d2d2" stroke-width="1"/>
<rect x="44.5" y="286.53" width="8" height="7.5" fill="#f4f4f4" stroke="#8a8a8a" stroke-width="1"/>
<path d="M46.5 290.53 L49 293.53 L54.5 288.03" fill="none" stroke="#34a444" stroke-width="1.9"/>
<path d="M34.5 310.06 H44" fill="none" stroke="#d2d2d2" stroke-width="1"/>
<rect x="44.5" y="306.06" width="8" height="7.5" fill="#f4f4f4" stroke="#8a8a8a" stroke-width="1"/>
<path d="M46.5 310.06 L49 313.06 L54.5 307.56" fill="none" stroke="#34a444" stroke-width="1.9"/>
<path d="M34.5 329.59 H44" fill="none" stroke="#d2d2d2" stroke-width="1"/>
<rect x="44.5" y="325.59" width="8" height="7.5" fill="#f4f4f4" stroke="#8a8a8a" stroke-width="1"/>
<path d="M46.5 329.59 L49 332.59 L54.5 327.09" fill="none" stroke="#34a444" stroke-width="1.9"/>
<path d="M34.5 349.12 H44" fill="none" stroke="#d2d2d2" stroke-width="1"/>
<rect x="44.5" y="345.12" width="8" height="7.5" fill="#f4f4f4" stroke="#8a8a8a" stroke-width="1"/>
<path d="M46.5 349.12 L49 352.12 L54.5 346.62" fill="none" stroke="#34a444" stroke-width="1.9"/>
<path d="M21.5 368.15 H27" fill="none" stroke="#d2d2d2" stroke-width="1"/>
<rect x="15.5" y="365.15" width="6" height="6.5" fill="#fafafa" stroke="#c4c4c4" stroke-width="1"/>
<path d="M17 368.35 h3" stroke="#222" stroke-width="1.2"/>
<path d="M37.5 387.68 H43" fill="none" stroke="#d2d2d2" stroke-width="1"/>
<rect x="31.5" y="384.68" width="6" height="6.5" fill="#fafafa" stroke="#c4c4c4" stroke-width="1"/>
<path d="M33 387.88 h3" stroke="#222" stroke-width="1.2"/>
<rect x="60.5" y="403.71" width="8" height="7.5" fill="#f4f4f4" stroke="#8a8a8a" stroke-width="1"/>
<path d="M62.5 407.71 L65 410.71 L70.5 405.21" fill="none" stroke="#34a444" stroke-width="1.9"/>
</svg>
<div class="t" style="left:28.50px;top:168.95px;">Sprzedawca bazowy</div>
<div class="t" style="left:28.50px;top:188.48px;">Rodzaj dokumentu</div>
<div class="t" style="left:61.30px;top:208.01px;">Faktura VAT</div>
<div class="t" style="left:61.30px;top:227.54px;">Faktura proforma</div>
<div class="t" style="left:61.30px;top:247.07px;">Faktura korygująca VAT</div>
<div class="t" style="left:61.30px;top:266.60px;">Faktura VAT MP</div>
<div class="t" style="left:61.30px;top:286.13px;">Faktura VAT (Duplikat)</div>
<div class="t" style="left:61.30px;top:305.66px;">Faktura VAT MP (Duplikat)</div>
<div class="t" style="left:61.30px;top:325.19px;">Rachunek</div>
<div class="t" style="left:61.30px;top:344.72px;">Rachunek (Duplikat)</div>
<div class="t" style="left:28.50px;top:364.25px;">Data wystawienia dokumentu</div>
<div class="t" style="left:43.75px;top:383.78px;">2010</div>
<div class="t" style="left:76.75px;top:403.31px;">czerwiec</div>
<div class="a" style="left:9.00px;top:570.50px;width:78.00px;height:17.50px;border:1px solid #b0b0b0;border-radius:3px;background:linear-gradient(#fafafa,#e4e4e4)"></div>
<svg class="a" style="left:20px;top:572px" width="12" height="14" viewBox="0 0 12 14"><path d="M1.8 7.5 A4.2 4.2 0 0 1 8.2 3.6" fill="none" stroke="#2a6cc0" stroke-width="2.2"/><path d="M6.6 0.8 L10.8 3.4 L6.6 6.2Z" fill="#2a6cc0"/><path d="M10.2 6.5 A4.2 4.2 0 0 1 3.8 10.4" fill="none" stroke="#1414a8" stroke-width="2.2"/><path d="M5.4 13.2 L1.2 10.6 L5.4 7.8Z" fill="#1414a8"/></svg>
<div class="t" style="left:35.00px;top:574.70px;">Odśwież</div>
<div class="a" style="left:98.50px;top:572.50px;width:10.50px;height:10.50px;border:1px solid #b4b4b4;border-radius:1px;background:#fff"></div>
<svg class="a" style="left:99px;top:572px" width="11" height="11" viewBox="0 0 11 11"><path d="M2.2 5.5 L4.3 8.3 L8.8 1.8" fill="none" stroke="#111" stroke-width="1.5"/></svg>
<div class="t b" style="left:113.00px;top:575.20px;">Włącz filtrację</div>
<div class="a" style="left:191.00px;top:108.50px;width:415.50px;height:327.50px;border:1px solid #7d7d7d;border-top-color:#5a7db0;border-radius:4px 4px 0 0;background:#edeceb;box-shadow:1px 1.5px 2.5px rgba(0,0,0,0.28)"></div>
<div class="a" style="left:192.00px;top:109.50px;width:413.50px;height:17.00px;background:linear-gradient(#a3c0e8,#7ba1d7);border-bottom:1px solid #5e83ba;border-radius:3px 3px 0 0"></div>
<div class="a" style="left:192.00px;top:126.50px;width:413.50px;height:1.50px;background:#f7f7f7"></div>
<div class="a" style="left:197.50px;top:113.00px;width:11.00px;height:9.50px;border:1px solid #3f5f92;border-top:2.5px solid #3f5f92;background:linear-gradient(#fbfbf5,#e8ead8)"></div>
<div class="t b" style="left:355.5px;top:112.3px;font-size:12px;line-height:12px;color:#fff;text-shadow:0 0 1.5px rgba(20,30,60,0.55)">Faktura VAT</div>
<div class="a" style="left:571.50px;top:111.00px;width:13.00px;height:13.50px;border:1px solid #4a6fa6;border-radius:2px;background:#8aaee2"></div>
<div class="a" style="left:575px;top:114.5px;width:6px;height:6.5px;border:1.2px solid #f4f7fc"><div class="a" style="left:1px;top:1px;width:2px;height:2px;background:#5b7fb3"></div></div>
<div class="a" style="left:588.00px;top:111.00px;width:15.00px;height:13.50px;border:1px solid #4a6fa6;border-radius:2px;background:#8aaee2"></div>
<svg class="a" style="left:591px;top:113.5px" width="9" height="9" viewBox="0 0 9 9"><path d="M1.5 1.5L7.5 7.5M7.5 1.5L1.5 7.5" stroke="#f6f8fc" stroke-width="1.5"/></svg>
<div class="a" style="left:198.50px;top:148.00px;width:401.25px;height:257.80px;border:1px solid #b6b6b6;border-radius:2px;background:#ededed"></div>
<div class="a dtab" style="left:198.75px;width:74.5px"></div>
<div class="a dtab" style="left:273px;width:69.5px"></div>
<div class="a dtab" style="left:342px;width:62px"></div>
<div class="a dtab" style="left:458px;width:89px"></div>
<div class="a" style="left:403.60px;top:131.60px;width:54.60px;height:17.60px;border:1px solid #b6b6b6;border-bottom:none;border-top:2px solid #7a94b2;border-radius:3px 3px 0 0;background:#edeceb;box-shadow:inset 0 1px 0 #fbfbfb,inset 1px 0 0 #f8f8f8"></div>
<div class="t" style="left:208.70px;top:137.60px;">Sprzedawca</div>
<div class="t" style="left:284.30px;top:137.60px;">Kontrahent</div>
<div class="t" style="left:353.50px;top:137.60px;">Produkty</div>
<div class="t" style="left:468.80px;top:137.60px;">Tekst końcowy</div>
<div class="t" style="left:413.50px;top:137.40px;">Terminy</div>
<div class="t b" style="left:204.50px;top:160.20px;">Rodzaj dokumentu</div>
<div class="a" style="left:304.75px;top:154.50px;width:187.00px;height:18.50px;border:1px solid #b2b2b2;border-radius:3px;background:linear-gradient(#f8f8f8,#e6e6e6)"></div>
<div class="a" style="left:475.50px;top:156.00px;width:1.00px;height:15.50px;background:#d4d4d4"></div>
<div class="a" style="left:476.50px;top:156.00px;width:1.00px;height:15.50px;background:#fafafa"></div>
<svg class="a" style="left:478.00px;top:157.40px" width="10" height="12" viewBox="0 0 10 12"><path d="M5 2.1L8.1 5.3H1.9Z M5 9.9L8.1 6.7H1.9Z" fill="#111"/></svg>
<div class="t" style="left:309.00px;top:160.20px;">Faktura VAT</div>
<div class="a" style="left:204.00px;top:184.00px;width:390.00px;height:1.00px;background:#cdcdcd"></div>
<div class="a" style="left:204.00px;top:185.00px;width:390.00px;height:1.00px;background:#f7f7f7"></div>
<div class="t b" style="left:204.50px;top:196.70px;">Miejsce wystawienia</div>
<div class="a" style="left:204.25px;top:208.75px;width:390.00px;height:17.50px;border:1px solid #b4b4b4;border-radius:2px;background:#fff;box-shadow:inset 0 1px 1px #e2e2e2"></div>
<div class="t" style="left:207.50px;top:214.20px;">STW</div>
<div class="t b" style="left:204.50px;top:234.20px;">Data wystawienia</div>
<div class="a" style="left:204.50px;top:246.25px;width:124.00px;height:18.25px;border:1px solid #b4b4b4;border-radius:2px;background:#fff;box-shadow:inset 0 1px 1px #e2e2e2"></div>
<div class="a" style="left:312.25px;top:247.25px;width:15.50px;height:16.25px;background:linear-gradient(#f6f6f6,#ebebeb);border-radius:0 2px 2px 0"></div>
<svg class="a" style="left:315.00px;top:251.00px" width="10" height="10" viewBox="0 0 10 10"><path d="M1.9 3.4L5 6.5L8.1 3.4" fill="none" stroke="#111" stroke-width="1.9"/></svg>
<div class="t" style="left:207.50px;top:251.70px;">04-06-2010</div>
<div class="t b" style="left:337.50px;top:234.20px;">Data sprzedaży</div>
<div class="a" style="left:337.50px;top:246.50px;width:124.00px;height:17.50px;border:1px solid #b4b4b4;border-radius:2px;background:#fff;box-shadow:inset 0 1px 1px #e2e2e2"></div>
<div class="a" style="left:445.30px;top:247.50px;width:15.00px;height:15.50px;background:linear-gradient(#f6f6f6,#ebebeb);border-radius:0 2px 2px 0"></div>
<svg class="a" style="left:448.00px;top:251.00px" width="10" height="10" viewBox="0 0 10 10"><path d="M1.9 3.4L5 6.5L8.1 3.4" fill="none" stroke="#111" stroke-width="1.9"/></svg>
<div class="t" style="left:340.50px;top:251.70px;">04-06-2010</div>
<div class="t b" style="left:204.50px;top:271.70px;">Forma płatności</div>
<div class="a" style="left:204.50px;top:283.75px;width:124.00px;height:17.50px;border:1px solid #b2b2b2;border-radius:3px;background:linear-gradient(#f8f8f8,#e6e6e6)"></div>
<div class="a" style="left:311.50px;top:285.50px;width:1.00px;height:14.50px;background:#d8d8d8"></div>
<svg class="a" style="left:315.00px;top:286.40px" width="10" height="12" viewBox="0 0 10 12"><path d="M5 2.1L8.1 5.3H1.9Z M5 9.9L8.1 6.7H1.9Z" fill="#111"/></svg>
<div class="t" style="left:208.25px;top:288.70px;">przelew</div>
<div class="t b" style="left:502.00px;top:271.70px;">Termin płatności</div>
<div class="a" style="left:537.00px;top:284.40px;width:57.00px;height:16.60px;border:1px solid #b4b4b4;border-radius:2px;background:#fff;box-shadow:inset 0 1px 1px #e2e2e2"></div>
<div class="a chk" style="left:204.5px;top:310px"></div>
<div class="t b" style="left:218.75px;top:311.70px;">Termin płatności w dniach</div>
<div class="a chk" style="left:204.5px;top:331px"></div>
<div class="t b" style="left:218.75px;top:332.95px;">Zapłacono</div>
<div class="a" style="left:204.00px;top:354.50px;width:390.00px;height:1.00px;background:#cdcdcd"></div>
<div class="a" style="left:204.00px;top:355.50px;width:390.00px;height:1.00px;background:#f7f7f7"></div>
<div class="t b" style="left:204.50px;top:367.95px;">Numer dokumentu</div>
<div class="a" style="left:204.50px;top:380.00px;width:390.00px;height:18.25px;border:1px solid #c2c2c2;border-radius:3px;background:#e9e9e9"></div>
<div class="t" style="left:208.25px;top:384.70px;color:#8f8f8f">6/06/2010</div>
<div class="a" style="left:582.50px;top:381.00px;width:11.00px;height:15.50px;border-left:1px solid #c8c8c8;background:#f2f2f2"></div>
<div class="a" style="left:582.50px;top:388.50px;width:11.00px;height:1.00px;background:#c8c8c8"></div>
<svg class="a" style="left:584px;top:381px" width="9" height="16" viewBox="0 0 9 16"><path d="M4.5 2.5L7.5 5.8H1.5Z M4.5 13.5L7.5 10.2H1.5Z" fill="#111"/></svg>
<div class="a" style="left:487.00px;top:411.00px;width:54.50px;height:17.50px;border:1px solid #4a4a4a;border-radius:3px;background:linear-gradient(#fafafa,#e2e2e2)"></div>
<svg class="a" style="left:499px;top:414px" width="14" height="12" viewBox="0 0 14 12"><path d="M1.8 3.2 L5.8 9.2 L11.8 3.2" fill="none" stroke="#22c322" stroke-width="2.6" stroke-linejoin="round" stroke-linecap="round"/></svg>
<div class="t" style="left:513.75px;top:415.70px;font-size:10.5px">OK</div>
<div class="a" style="left:545.40px;top:411.00px;width:54.00px;height:17.50px;border:1px solid #b2b2b2;border-radius:3px;background:linear-gradient(#fafafa,#e4e4e4)"></div>
<svg class="a" style="left:551px;top:413.5px" width="12" height="12" viewBox="0 0 12 12"><path d="M2 2L10 10M10 2L2 10" stroke="#e01818" stroke-width="3"/></svg>
<div class="t" style="left:565.50px;top:415.70px;font-size:10.5px">Anuluj</div>
<div class="a" style="left:336.50px;top:264.20px;width:230.00px;height:133.10px;background:#fff;box-shadow:1px 1px 2px rgba(0,0,0,0.35)"></div>
<div class="a" style="left:336.50px;top:264.20px;width:230.00px;height:23.10px;background:#83a7d9"></div>
<div class="a" style="left:336.50px;top:287.30px;width:230.00px;height:16.70px;background:#efefef"></div>
<svg class="a" style="left:336px;top:264px" width="231" height="24" viewBox="336 264 231 24"><defs><linearGradient id="ag" x1="0" y1="0" x2="0" y2="1"><stop offset="0" stop-color="#5b88c4"/><stop offset="1" stop-color="#2f5c9c"/></linearGradient></defs><path d="M342.1 276.4 L349.6 269.2 L349.6 272.6 L356.2 272.6 L356.2 280.2 L349.6 280.2 L349.6 283.6 Z" fill="url(#ag)" stroke="#2e5a98" stroke-width="0.8" stroke-linejoin="round"/><path d="M561 277 L553.5 270.2 L553.5 273.6 L546.9 273.6 L546.9 280.6 L553.5 280.6 L553.5 284 Z" fill="url(#ag)" stroke="#2e5a98" stroke-width="0.8" stroke-linejoin="round"/><path d="M455.5 283.3 h4 l-2 2.2z" fill="#f4f7fc"/></svg>
<div class="t" style="left:414.40px;top:272.50px;color:#eef3fa">czerwiec</div>
<div class="t" style="left:467.60px;top:272.50px;color:#eef3fa">2010</div>
<div class="t" style="left:336.50px;top:292.10px;width:32.86px;text-align:center;color:#c43434">niedz.</div>
<div class="t" style="left:369.36px;top:292.10px;width:32.86px;text-align:center;color:#3a3a3a">pon.</div>
<div class="t" style="left:402.21px;top:292.10px;width:32.86px;text-align:center;color:#3a3a3a">wt.</div>
<div class="t" style="left:435.07px;top:292.10px;width:32.86px;text-align:center;color:#3a3a3a">śr.</div>
<div class="t" style="left:467.93px;top:292.10px;width:32.86px;text-align:center;color:#3a3a3a">czw.</div>
<div class="t" style="left:500.79px;top:292.10px;width:32.86px;text-align:center;color:#3a3a3a">pt.</div>
<div class="t" style="left:533.64px;top:292.10px;width:32.86px;text-align:center;color:#c43434">sob.</div>
<div class="a" style="left:501.00px;top:304.40px;width:32.60px;height:15.00px;background:#83a7d9"></div>
<div class="t" style="left:336.50px;top:307.80px;width:32.86px;text-align:center;color:#9c9c9c">30</div>
<div class="t" style="left:369.36px;top:307.80px;width:32.86px;text-align:center;color:#9c9c9c">31</div>
<div class="t" style="left:402.21px;top:307.80px;width:32.86px;text-align:center;color:#2e2e2e">1</div>
<div class="t" style="left:435.07px;top:307.80px;width:32.86px;text-align:center;color:#2e2e2e">2</div>
<div class="t" style="left:467.93px;top:307.80px;width:32.86px;text-align:center;color:#2e2e2e">3</div>
<div class="t" style="left:500.79px;top:307.80px;width:32.86px;text-align:center;color:#f4f7fc">4</div>
<div class="t" style="left:533.64px;top:307.80px;width:32.86px;text-align:center;color:#c43434">5</div>
<div class="t" style="left:336.50px;top:323.35px;width:32.86px;text-align:center;color:#c43434">6</div>
<div class="t" style="left:369.36px;top:323.35px;width:32.86px;text-align:center;color:#2e2e2e">7</div>
<div class="t" style="left:402.21px;top:323.35px;width:32.86px;text-align:center;color:#2e2e2e">8</div>
<div class="t" style="left:435.07px;top:323.35px;width:32.86px;text-align:center;color:#2e2e2e">9</div>
<div class="t" style="left:467.93px;top:323.35px;width:32.86px;text-align:center;color:#2e2e2e">10</div>
<div class="t" style="left:500.79px;top:323.35px;width:32.86px;text-align:center;color:#2e2e2e">11</div>
<div class="t" style="left:533.64px;top:323.35px;width:32.86px;text-align:center;color:#c43434">12</div>
<div class="t" style="left:336.50px;top:338.90px;width:32.86px;text-align:center;color:#c43434">13</div>
<div class="t" style="left:369.36px;top:338.90px;width:32.86px;text-align:center;color:#2e2e2e">14</div>
<div class="t" style="left:402.21px;top:338.90px;width:32.86px;text-align:center;color:#2e2e2e">15</div>
<div class="t" style="left:435.07px;top:338.90px;width:32.86px;text-align:center;color:#2e2e2e">16</div>
<div class="t" style="left:467.93px;top:338.90px;width:32.86px;text-align:center;color:#2e2e2e">17</div>
<div class="t" style="left:500.79px;top:338.90px;width:32.86px;text-align:center;color:#2e2e2e">18</div>
<div class="t" style="left:533.64px;top:338.90px;width:32.86px;text-align:center;color:#c43434">19</div>
<div class="t" style="left:336.50px;top:354.45px;width:32.86px;text-align:center;color:#c43434">20</div>
<div class="t" style="left:369.36px;top:354.45px;width:32.86px;text-align:center;color:#2e2e2e">21</div>
<div class="t" style="left:402.21px;top:354.45px;width:32.86px;text-align:center;color:#2e2e2e">22</div>
<div class="t" style="left:435.07px;top:354.45px;width:32.86px;text-align:center;color:#2e2e2e">23</div>
<div class="t" style="left:467.93px;top:354.45px;width:32.86px;text-align:center;color:#2e2e2e">24</div>
<div class="t" style="left:500.79px;top:354.45px;width:32.86px;text-align:center;color:#2e2e2e">25</div>
<div class="t" style="left:533.64px;top:354.45px;width:32.86px;text-align:center;color:#c43434">26</div>
<div class="t" style="left:336.50px;top:370.00px;width:32.86px;text-align:center;color:#c43434">27</div>
<div class="t" style="left:369.36px;top:370.00px;width:32.86px;text-align:center;color:#2e2e2e">28</div>
<div class="t" style="left:402.21px;top:370.00px;width:32.86px;text-align:center;color:#2e2e2e">29</div>
<div class="t" style="left:435.07px;top:370.00px;width:32.86px;text-align:center;color:#2e2e2e">30</div>
<div class="t" style="left:467.93px;top:370.00px;width:32.86px;text-align:center;color:#9c9c9c">1</div>
<div class="t" style="left:500.79px;top:370.00px;width:32.86px;text-align:center;color:#9c9c9c">2</div>
<div class="t" style="left:533.64px;top:370.00px;width:32.86px;text-align:center;color:#9c9c9c">3</div>
<div class="t" style="left:336.50px;top:385.55px;width:32.86px;text-align:center;color:#9c9c9c">4</div>
<div class="t" style="left:369.36px;top:385.55px;width:32.86px;text-align:center;color:#9c9c9c">5</div>
<div class="t" style="left:402.21px;top:385.55px;width:32.86px;text-align:center;color:#9c9c9c">6</div>
<div class="t" style="left:435.07px;top:385.55px;width:32.86px;text-align:center;color:#9c9c9c">7</div>
<div class="t" style="left:467.93px;top:385.55px;width:32.86px;text-align:center;color:#9c9c9c">8</div>
<div class="t" style="left:500.79px;top:385.55px;width:32.86px;text-align:center;color:#9c9c9c">9</div>
<div class="t" style="left:533.64px;top:385.55px;width:32.86px;text-align:center;color:#9c9c9c">10</div>
<svg class="a" style="left:500px;top:352px" width="12" height="17" viewBox="500 352 12 17"><path d="M501.25 353 L501.25 366 L503.8 363.6 L506 367 L507.9 366.2 L506.4 362.6 L510 362.3 Z" fill="#fff" stroke="#111" stroke-width="1" stroke-linejoin="miter"/></svg>
</body></html>
